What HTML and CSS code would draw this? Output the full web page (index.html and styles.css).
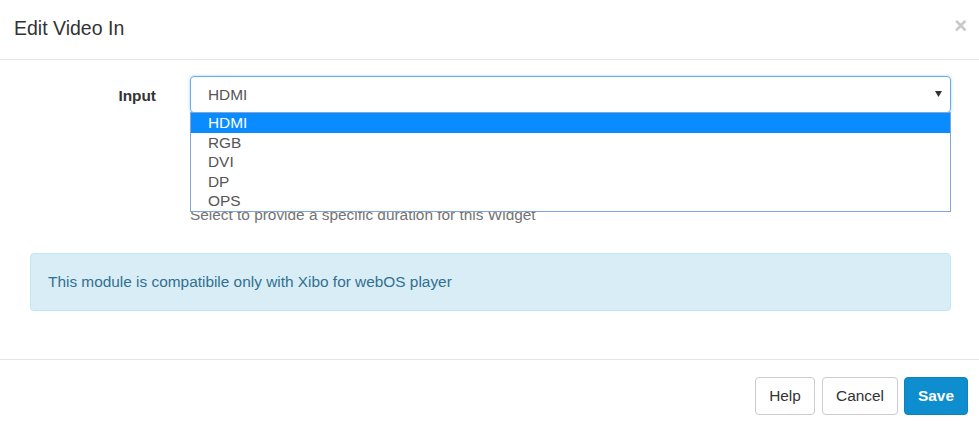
FILE: index.html
```html
<!DOCTYPE html>
<html lang="en">
<head>
<meta charset="utf-8">
<title>Edit Video In</title>
<link rel="stylesheet" href="styles.css">
</head>
<body>
<div class="modal">
  <div class="modal-header">
    <h4 class="modal-title">Edit Video In</h4>
    <span class="close">×</span>
  </div>
  <div class="modal-body">
    <div class="form-group">
      <label class="control-label">Input</label>
      <div class="field">
        <div class="select">
          <span class="select-value">HDMI</span>
          <svg class="caret" width="7" height="6" viewBox="0 0 7 6"><path d="M0 0 L7 0 L3.5 6 Z" fill="#333"/></svg>
        </div>
        <ul class="dropdown">
          <li class="option selected">HDMI</li>
          <li class="option">RGB</li>
          <li class="option">DVI</li>
          <li class="option">DP</li>
          <li class="option">OPS</li>
        </ul>
        <p class="help-block">Select to provide a specific duration for this Widget</p>
      </div>
    </div>
    <div class="alert">This module is compatibile only with Xibo for webOS player</div>
  </div>
  <div class="modal-footer">
    <button class="btn btn-help">Help</button>
    <button class="btn btn-cancel">Cancel</button>
    <button class="btn btn-primary">Save</button>
  </div>
</div>
</body>
</html>
```
FILE: styles.css
```css
* { box-sizing: border-box; }
html, body {
  margin: 0;
  padding: 0;
  background: #fff;
  font-family: "Liberation Sans", Arial, Helvetica, sans-serif;
  font-size: 15.4px;
  color: #333;
}
.modal {
  width: 979px;
  height: 429px;
  overflow: hidden;
}
.modal-header {
  display: flex;
  justify-content: space-between;
  align-items: flex-start;
  height: 60px;
  padding: 13px 12px 0 14px;
  border-bottom: 1px solid #e5e5e5;
}
.modal-title {
  margin: 0;
  font-size: 19.5px;
  font-weight: normal;
  line-height: 30px;
  color: #333;
}
.close {
  font-size: 22px;
  font-weight: bold;
  line-height: 26px;
  color: #c8c8c8;
}
.modal-body {
  padding: 16px 28px 0 30px;
  height: 300px;
  border-bottom: 1px solid #e5e5e5;
}
.form-group {
  display: grid;
  grid-template-columns: 160px 1fr;
  height: 140px;
}
.control-label {
  font-weight: bold;
  text-align: right;
  padding-right: 34px;
  padding-top: 10px;
  line-height: 20px;
  color: #333;
}
.field {
  position: relative;
}
.select {
  display: flex;
  align-items: center;
  justify-content: space-between;
  height: 37px;
  border: 1px solid #66afe9;
  border-radius: 4px;
  box-shadow: 0 0 3px rgba(102, 175, 233, 0.6);
  padding: 0 8px 0 17px;
  color: #555;
}
.select-value { line-height: 20px; }
.caret { display: block; margin-top: -2px; }
.help-block {
  margin: 0;
  padding-top: 92px;
  line-height: 20px;
  color: #737373;
}
.dropdown {
  position: absolute;
  top: 36px;
  left: 0;
  right: 0;
  margin: 0;
  padding: 0;
  list-style: none;
  background: #fff;
  border: 1px solid #7fa6d6;
}
.option {
  height: 19.6px;
  line-height: 19.6px;
  padding-left: 17px;
  color: #555;
}
.option.selected {
  background: #0a8cff;
  color: #fff;
}
.alert {
  margin-top: 37px;
  height: 58px;
  padding: 0 17px;
  display: flex;
  align-items: center;
  background: #d9edf7;
  border: 1px solid #bce8f1;
  border-radius: 4px;
  color: #31708f;
}
.modal-footer {
  display: flex;
  justify-content: flex-end;
  gap: 6px;
  padding: 17px 11px 0 0;
}
.btn {
  height: 38px;
  padding: 0;
  display: flex;
  align-items: center;
  justify-content: center;
  font-family: inherit;
  font-size: 15.4px;
  color: #333;
  background: #fff;
  border: 1px solid #ccc;
  border-radius: 4px;
}
.btn-help { width: 60px; margin-right: 1px; }
.btn-cancel { width: 76px; }
.btn-primary {
  width: 64px;
  background: #0e8ece;
  border-color: #0c82bd;
  color: #fff;
  font-weight: bold;
}
```
